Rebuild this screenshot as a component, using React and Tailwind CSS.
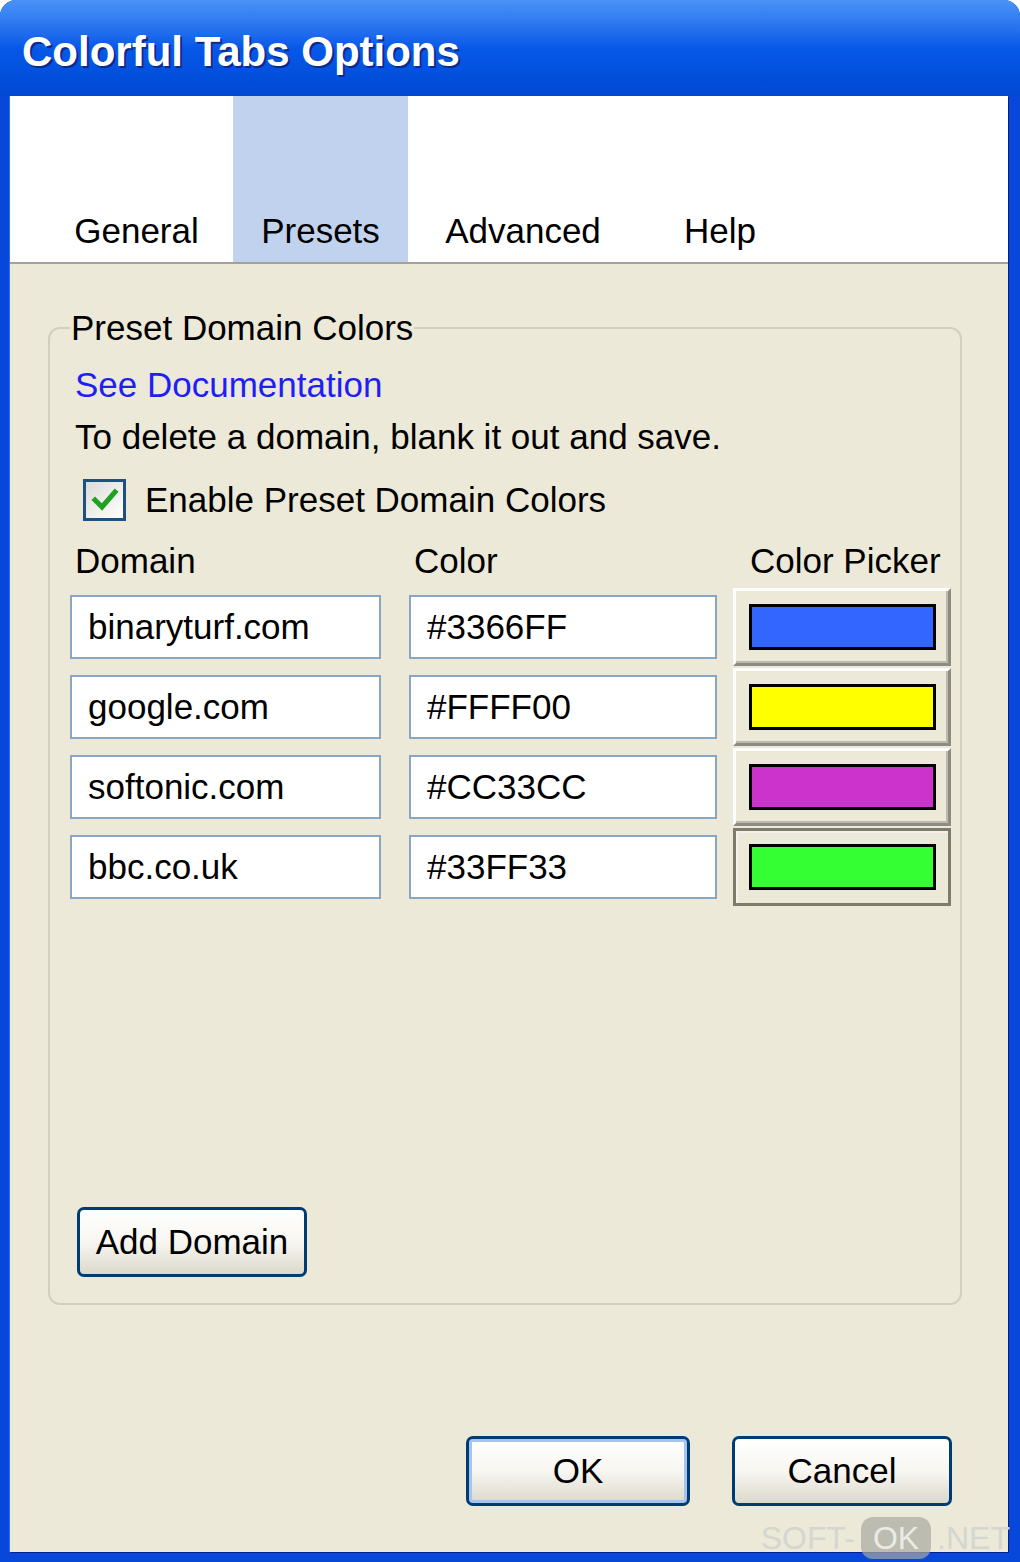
import React from "react";

const rows = [
  { domain: "binaryturf.com", color: "#3366FF", swatch: "bg-[#3366ff]" },
  { domain: "google.com", color: "#FFFF00", swatch: "bg-[#ffff00]" },
  { domain: "softonic.com", color: "#CC33CC", swatch: "bg-[#cc33cc]" },
  { domain: "bbc.co.uk", color: "#33FF33", swatch: "bg-[#33ff33]", pressed: true },
];

const tabs = [
  { label: "General", w: "w-[193px]" },
  { label: "Presets", w: "w-[175px]", active: true },
  { label: "Advanced", w: "w-[230px]" },
  { label: "Help", w: "w-[164px]" },
];

const XpButton = ({ children, className = "", isDefault = false }) => (
  <div
    className={`flex items-center justify-center rounded-[7px] border-[3px] border-[#003c74] bg-linear-to-b from-white via-[#f7f6f1] to-[#dcd9cc] leading-[52px] ${
      isDefault ? "shadow-[inset_0_0_0_3px_#a7c4f0]" : ""
    } ${className}`}
  >
    {children}
  </div>
);

const ColorPickerButton = ({ swatch, pressed }) => (
  <div
    className={`flex h-[78px] w-[218px] items-center justify-center bg-[#ece9d8] border-[3px] ${
      pressed
        ? "border-[#7d7a6e] shadow-[inset_2px_2px_0_#f4f2ea]"
        : "border-t-white border-l-white border-b-[#8e8c82] border-r-[#8e8c82] shadow-[inset_-2px_-2px_0_#bcb9ad]"
    }`}
  >
    <div className={`h-[46px] w-[187px] border-[3px] border-black ${swatch}`} />
  </div>
);

export default function App() {
  return (
    <div className="relative flex h-[1562px] w-[1020px] flex-col overflow-hidden rounded-t-[16px] bg-[#0748db] font-['Liberation_Sans',Arial,sans-serif] text-[35px] text-black">
      {/* title bar */}
      <div className="flex h-[96px] shrink-0 items-center bg-linear-to-b from-[#4a93f8] via-[#0758e8] to-[#0049d4] pl-[22px] pt-[8px]">
        <h1 className="text-[42px] font-bold leading-none text-white [text-shadow:2px_2px_0_#0b2a8a]">
          Colorful Tabs Options
        </h1>
      </div>

      <div className="mb-[10px] ml-[10px] mr-[12px] flex flex-1 flex-col shadow-[1px_1px_0_#001f8e,-1px_0_0_#2a6ff2]">
        {/* tab strip */}
        <div className="flex h-[168px] shrink-0 items-stretch border-b-2 border-[#a3a19a] bg-white pl-[30px]">
          {tabs.map((t) => (
            <div
              key={t.label}
              className={`flex items-end justify-center pb-[5px] leading-[52px] ${t.w} ${
                t.active ? "bg-[#c1d2ee]" : ""
              }`}
            >
              {t.label}
            </div>
          ))}
        </div>

        {/* body */}
        <div className="flex flex-1 flex-col bg-[#ece9d8] pt-[38px]">
          <fieldset className="ml-[38px] mr-[46px] rounded-[12px] border-2 border-[#d0d0bf] pb-[26px] pl-[20px] pr-[9px]">
            <legend className="px-[1px] leading-[52px]">Preset Domain Colors</legend>

            <div className="pl-[5px] pt-[5px] leading-[52px]">
              <div className="text-[#1f1ff5]">See Documentation</div>
              <div>To delete a domain, blank it out and save.</div>
              <div className="mt-[11px] flex items-center pl-[8px]">
                <div className="flex h-[42px] w-[43px] items-center justify-center border-[3px] border-[#1c5180] bg-linear-to-br from-[#dcdcd6] to-white">
                  <svg width="28" height="26" viewBox="0 0 28 26">
                    <polyline
                      points="4,13 11,20 24,5"
                      fill="none"
                      stroke="#21a121"
                      strokeWidth="5"
                      strokeLinecap="square"
                    />
                  </svg>
                </div>
                <span className="ml-[19px]">Enable Preset Domain Colors</span>
              </div>
              <div className="mt-[9px] flex">
                <span className="w-[339px]">Domain</span>
                <span className="w-[336px]">Color</span>
                <span>Color Picker</span>
              </div>
            </div>

            <div className="flex flex-col">
              {rows.map((r) => (
                <div key={r.domain} className="flex h-[80px] items-center">
                  <div className="flex h-[64px] w-[311px] items-center border-2 border-[#8aa6c4] bg-white pl-[16px]">
                    {r.domain}
                  </div>
                  <div className="ml-[28px] flex h-[64px] w-[308px] items-center border-2 border-[#8aa6c4] bg-white pl-[16px]">
                    {r.color}
                  </div>
                  <div className="ml-[16px]">
                    <ColorPickerButton swatch={r.swatch} pressed={r.pressed} />
                  </div>
                </div>
              ))}
            </div>

            <XpButton className="ml-[7px] mt-[300px] h-[70px] w-[230px]">Add Domain</XpButton>
          </fieldset>

          <div className="mr-[56px] mt-[131px] flex justify-end gap-[42px]">
            <XpButton isDefault className="h-[70px] w-[224px]">
              OK
            </XpButton>
            <XpButton className="h-[70px] w-[220px]">Cancel</XpButton>
          </div>
        </div>
      </div>

      {/* watermark */}
      <div className="absolute bottom-[3px] right-[10px] flex items-center text-[32px] leading-none text-[#d6d6d0]">
        <span>SOFT-</span>
        <span className="mx-[6px] rounded-[12px] bg-[#a9a8a0]/70 px-[12px] py-[5px] text-[#ebebe6]">OK</span>
        <span>.NET</span>
      </div>
    </div>
  );
}
